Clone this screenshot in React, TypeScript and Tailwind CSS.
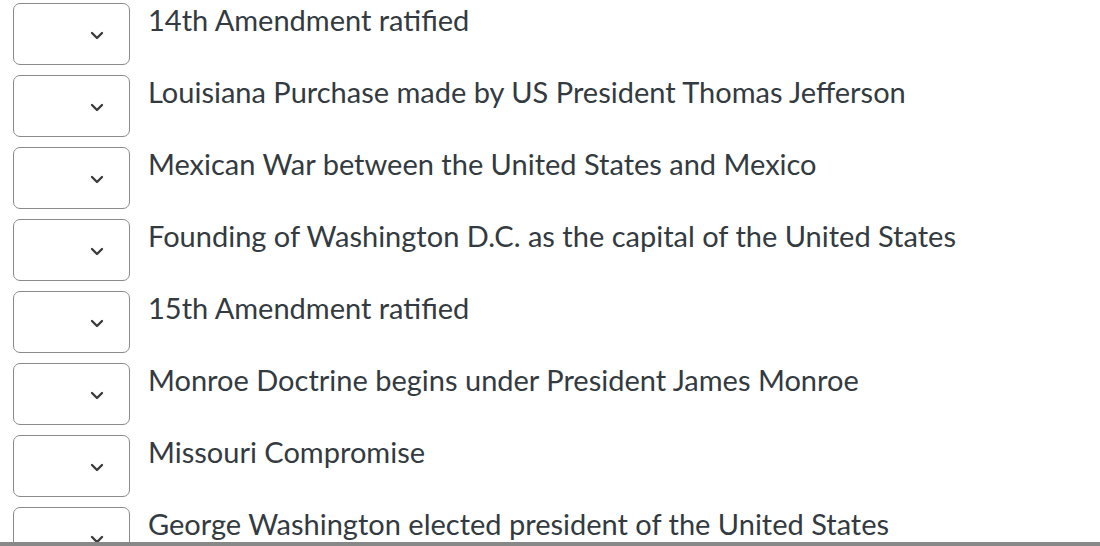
const items = [
  '14th Amendment ratified',
  'Louisiana Purchase made by US President Thomas Jefferson',
  'Mexican War between the United States and Mexico',
  'Founding of Washington D.C. as the capital of the United States',
  '15th Amendment ratified',
  'Monroe Doctrine begins under President James Monroe',
  'Missouri Compromise',
  'George Washington elected president of the United States',
];

const Chevron = () => (
  <svg viewBox="0 0 14 9" className="w-[14px] h-[9px]" fill="none" stroke="#3d3d3d" strokeWidth="2.4" strokeLinecap="round" strokeLinejoin="round">
    <path d="M2 2l5 5 5-5" />
  </svg>
);

export default function App() {
  return (
    <div className="w-[1100px] h-[546px] bg-white flex flex-col overflow-hidden" style={{ fontFamily: 'Lato, "Noto Sans", sans-serif' }}>
      <div className="flex-1 overflow-hidden">
        {items.map((text) => (
          <div key={text} className="flex items-start h-[72px]">
            <div className="ml-[13px] mt-[3px] w-[117px] h-[62px] shrink-0 border border-[#8b8b8b] rounded-[7px] flex items-center justify-end pr-[25px] pt-[2px]">
              <Chevron />
            </div>
            <div className="ml-[18px] text-[29px] leading-[40px] text-[#333a40]">{text}</div>
          </div>
        ))}
      </div>
      <div className="h-[4px] bg-[#888888] shrink-0" />
    </div>
  );
}
